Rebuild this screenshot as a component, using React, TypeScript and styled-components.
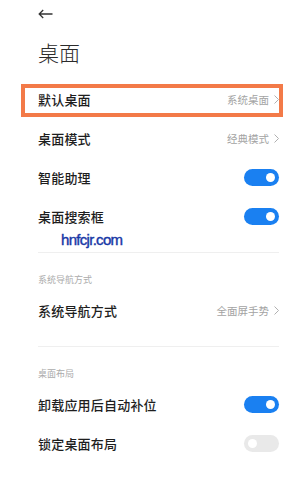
import React from 'react';
import styled, { createGlobalStyle, css } from 'styled-components';

const GlobalStyle = createGlobalStyle`
  html, body {
    margin: 0;
    padding: 0;
    background: #ffffff;
  }
  body {
    font-family: "Noto Sans CJK SC", "Noto Sans", sans-serif;
    -webkit-font-smoothing: antialiased;
  }
`;

const Page = styled.div`
  position: relative;
  width: 304px;
  height: 477px;
  overflow: hidden;
  background: #fff;
  padding: 0 25px 0 38px;
  box-sizing: border-box;
`;

const BackButton = styled.div`
  display: flex;
  align-items: center;
  height: 12px;
  padding-top: 8px;
`;

const Title = styled.h1`
  margin: 0;
  padding-top: 17px;
  height: 43px;
  font-size: 21px;
  line-height: 30px;
  font-weight: 300;
  color: #2b2b2b;
`;

const Row = styled.div<{ $highlight?: boolean }>`
  position: relative;
  display: flex;
  align-items: center;
  justify-content: space-between;
  height: 39px;

  ${(p) =>
    p.$highlight &&
    css`
      &::after {
        content: '';
        position: absolute;
        left: -17px;
        right: -4px;
        top: 4px;
        bottom: 2px;
        border: 4px solid #f37a48;
        pointer-events: none;
      }
    `}
`;

const Label = styled.span`
  font-size: 13px;
  font-weight: 500;
  color: #1e1e1e;
  letter-spacing: 0.2px;
`;

const Value = styled.span`
  display: flex;
  align-items: center;
  gap: 5px;
  font-size: 10.5px;
  color: #a3a3a3;
`;

const Divider = styled.div`
  margin-top: 16px;
  height: 1px;
  background: #efefef;
`;

const SectionTitle = styled.div`
  padding: 20px 0 4px;
  font-size: 9px;
  line-height: 14px;
  color: #ababab;
`;

const Switch = styled.div<{ $on: boolean }>`
  position: relative;
  width: 35px;
  height: 17px;
  border-radius: 9px;
  background: ${(p) => (p.$on ? '#1a80f1' : '#e9e9e9')};

  &::after {
    content: '';
    position: absolute;
    top: 4px;
    width: 9px;
    height: 9px;
    border-radius: 50%;
    background: #fff;
    ${(p) => (p.$on ? 'right: 4px;' : 'left: 4px;')}
  }
`;

const Watermark = styled.div`
  position: absolute;
  left: 61px;
  top: 231px;
  font-family: "Liberation Sans", Arial, sans-serif;
  font-size: 15px;
  font-weight: 400;
  color: #1737a6;
  letter-spacing: -0.7px;
  -webkit-text-stroke: 0.4px #1737a6;
  text-shadow: 0 0 2px #fff, 0 0 2px #fff;
`;

const Chevron = () => (
  <svg width="5" height="9" viewBox="0 0 5 9">
    <polyline points="0.5,0.5 4.5,4.5 0.5,8.5" fill="none" stroke="#b0b0b0" strokeWidth="1" />
  </svg>
);

const BackArrow = () => (
  <svg width="15" height="10" viewBox="0 0 15 10">
    <path d="M14.5 5H1.2M5.2 1L1.2 5l4 4" fill="none" stroke="#333" strokeWidth="1.3" />
  </svg>
);

function App() {
  return (
    <>
      <GlobalStyle />
      <Page>
        <BackButton>
          <BackArrow />
        </BackButton>
        <Title>桌面</Title>

        <Row $highlight>
          <Label>默认桌面</Label>
          <Value>
            系统桌面 <Chevron />
          </Value>
        </Row>
        <Row>
          <Label>桌面模式</Label>
          <Value>
            经典模式 <Chevron />
          </Value>
        </Row>
        <Row>
          <Label>智能助理</Label>
          <Switch $on />
        </Row>
        <Row>
          <Label>桌面搜索框</Label>
          <Switch $on />
        </Row>

        <Divider />
        <SectionTitle>系统导航方式</SectionTitle>
        <Row>
          <Label>系统导航方式</Label>
          <Value>
            全面屏手势 <Chevron />
          </Value>
        </Row>

        <Divider />
        <SectionTitle>桌面布局</SectionTitle>
        <Row>
          <Label>卸载应用后自动补位</Label>
          <Switch $on />
        </Row>
        <Row>
          <Label>锁定桌面布局</Label>
          <Switch $on={false} />
        </Row>

        <Watermark>hnfcjr.com</Watermark>
      </Page>
    </>
  );
}

export default App;
